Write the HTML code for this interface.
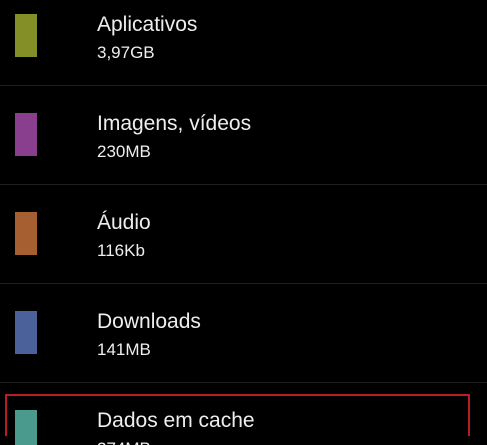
<!DOCTYPE html>
<html style="overflow:hidden;width:487px;height:445px"><head><style>
body{margin:0;width:487px;height:445px;background:#000;overflow:hidden;position:relative;font-family:"Liberation Sans",sans-serif;color:#eee}
.sq{position:absolute;left:15px;width:22px;height:43px}
.t{position:absolute;left:97px;font-size:21px;line-height:21px}
.s{position:absolute;left:97px;font-size:17px;line-height:17px}
.d{position:absolute;left:0;width:487px;height:1px;background:#1f1f1f}
</style></head><body>
<div class="sq" style="top:14px;background:#858f28"></div>
<div class="t" style="top:14px">Aplicativos</div><div class="s" style="top:44px">3,97GB</div>
<div class="d" style="top:85px"></div>
<div class="sq" style="top:113px;background:#8a3e8e"></div>
<div class="t" style="top:113px">Imagens, vídeos</div><div class="s" style="top:143px">230MB</div>
<div class="d" style="top:184px"></div>
<div class="sq" style="top:212px;background:#a65f30"></div>
<div class="t" style="top:212px">Áudio</div><div class="s" style="top:242px">116Kb</div>
<div class="d" style="top:283px"></div>
<div class="sq" style="top:311px;background:#4a619a"></div>
<div class="t" style="top:311px">Downloads</div><div class="s" style="top:341px">141MB</div>
<div class="d" style="top:382px"></div>
<div style="position:absolute;left:5px;top:394px;width:461px;height:40px;border:2px solid #b81c24;border-bottom:none"></div>
<div class="sq" style="top:410px;background:#4a9a8e"></div>
<div class="t" style="top:410px">Dados em cache</div><div class="s" style="top:440px">274MB</div>
</body></html>
